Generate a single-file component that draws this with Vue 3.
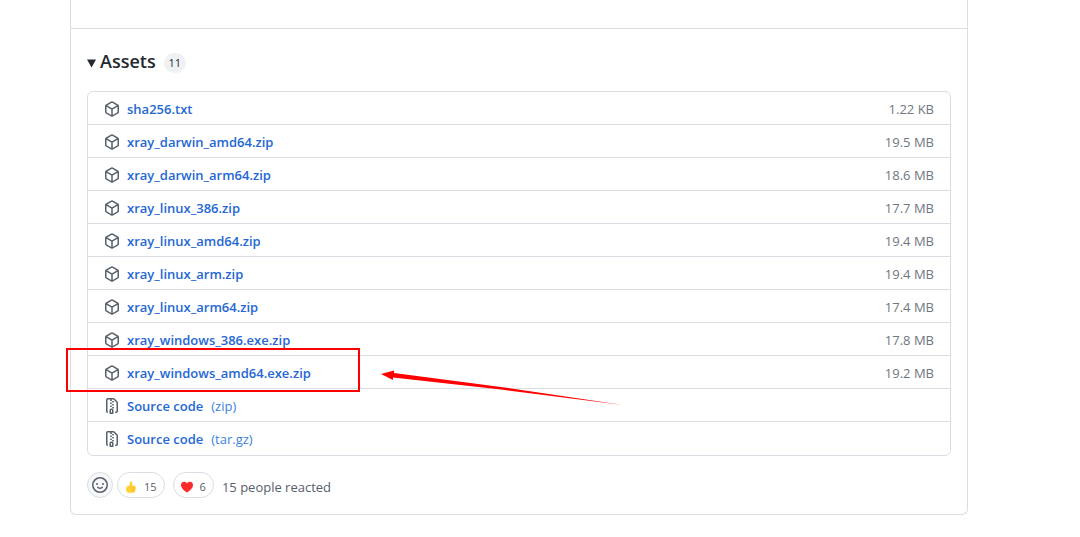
<script setup>
import { ref } from 'vue'

const assets = ref([
  { name: 'sha256.txt', size: '1.22 KB' },
  { name: 'xray_darwin_amd64.zip', size: '19.5 MB' },
  { name: 'xray_darwin_arm64.zip', size: '18.6 MB' },
  { name: 'xray_linux_386.zip', size: '17.7 MB' },
  { name: 'xray_linux_amd64.zip', size: '19.4 MB' },
  { name: 'xray_linux_arm.zip', size: '19.4 MB' },
  { name: 'xray_linux_arm64.zip', size: '17.4 MB' },
  { name: 'xray_windows_386.exe.zip', size: '17.8 MB' },
  { name: 'xray_windows_amd64.exe.zip', size: '19.2 MB', marked: true },
  { name: 'Source code', ext: '(zip)' },
  { name: 'Source code', ext: '(tar.gz)' }
])
</script>

<template>
  <main class="release-card">
    <div class="release-body"></div>

    <div class="release-footer">
      <details open>
        <summary class="assets-title">
          <svg class="caret" viewBox="0 0 9 9"><path d="M0 0.5h9L4.5 8.5z" /></svg>
          <span class="title-text">Assets</span>
          <span class="counter">{{ assets.length }}</span>
        </summary>

        <ul class="asset-list">
          <li v-for="(item, i) in assets" :key="i" class="asset-row">
            <svg v-if="item.ext" class="icon" viewBox="0 0 16 16">
              <path fill-rule="evenodd" d="M3.5 1.75a.25.25 0 01.25-.25h3a.75.75 0 000 1.5h.5a.75.75 0 000-1.5h2.086a.25.25 0 01.177.073l2.914 2.914a.25.25 0 01.073.177v8.586a.25.25 0 01-.25.25h-.5a.75.75 0 000 1.5h.5A1.75 1.75 0 0014 13.25V4.664c0-.464-.184-.909-.513-1.237L10.573.513A1.75 1.75 0 009.336 0H3.75A1.75 1.75 0 002 1.75v11.5c0 .649.353 1.214.874 1.515a.75.75 0 10.752-1.298.25.25 0 01-.126-.217V1.75zM8.75 3a.75.75 0 000 1.5h.5a.75.75 0 000-1.5h-.5zM6 5.25a.75.75 0 01.75-.75h.5a.75.75 0 010 1.5h-.5A.75.75 0 016 5.25zm2 1.5A.75.75 0 018.75 6h.5a.75.75 0 010 1.5h-.5A.75.75 0 018 6.75zm-1.25.75a.75.75 0 000 1.5h.5a.75.75 0 000-1.5h-.5zM8 9.75A.75.75 0 018.75 9h.5a.75.75 0 010 1.5h-.5A.75.75 0 018 9.75zm-.75.75a1.75 1.75 0 00-1.75 1.75v3c0 .414.336.75.75.75h2.5a.75.75 0 00.75-.75v-3a1.75 1.75 0 00-1.75-1.75h-.5zM7 12.25a.25.25 0 01.25-.25h.5a.25.25 0 01.25.25v2.25H7v-2.25z" />
            </svg>
            <svg v-else class="icon" viewBox="0 0 16 16">
              <path fill-rule="evenodd" d="M8.878.392a1.75 1.75 0 00-1.756 0l-5.25 3.045A1.75 1.75 0 001 4.951v6.098c0 .624.332 1.2.872 1.514l5.25 3.045a1.75 1.75 0 001.756 0l5.25-3.045c.54-.313.872-.89.872-1.514V4.951c0-.624-.332-1.2-.872-1.514L8.878.392zM7.875 1.69a.25.25 0 01.25 0l4.63 2.685L8 7.133 3.245 4.375l4.63-2.685zM2.5 5.677v5.372c0 .09.047.171.125.216l4.625 2.683V8.432L2.5 5.677zm6.25 8.271l4.625-2.683a.25.25 0 00.125-.216V5.677L8.75 8.432v5.516z" />
            </svg>
            <a href="#" class="asset-link">
              <span class="asset-name">{{ item.name }}</span>
              <span v-if="item.ext" class="asset-ext">{{ item.ext }}</span>
            </a>
            <span v-if="item.size" class="asset-size">{{ item.size }}</span>
            <template v-if="item.marked">
              <div class="mark-box"></div>
              <svg class="mark-arrow" viewBox="0 0 242 36">
                <path d="M0 4L13 0.5V3L120 17L242 35L120 19.5L12 7.5V10z" />
              </svg>
            </template>
          </li>
        </ul>
      </details>

      <div class="reactions">
        <button type="button" class="react-add" aria-label="Add reaction">
          <svg class="icon" viewBox="0 0 16 16">
            <path fill-rule="evenodd" d="M1.5 8a6.5 6.5 0 1113 0 6.5 6.5 0 01-13 0zM8 0a8 8 0 100 16A8 8 0 008 0zM5 8a1 1 0 100-2 1 1 0 000 2zm7-1a1 1 0 11-2 0 1 1 0 012 0zM5.32 9.636a.75.75 0 011.038.175l.007.009c.103.118.22.222.35.31.264.178.683.37 1.285.37.602 0 1.02-.192 1.285-.371.13-.088.247-.192.35-.31l.007-.008a.75.75 0 111.222.87c-.06.08-.13.16-.206.235-.16.166-.338.316-.53.445-.63.418-1.37.638-2.127.629-.946 0-1.652-.308-2.126-.63a3.32 3.32 0 01-.737-.686.75.75 0 01.182-1.041z" />
          </svg>
        </button>
        <button type="button" class="react-pill">
          <svg class="emoji" viewBox="0 0 12 12">
            <path fill="#ffcf33" d="M5.6 0.3C6.7 0.2 7.3 1 7.3 2V4.8H9.3C10.3 4.8 10.7 5.5 10.4 6.2C10.9 6.7 10.9 7.4 10.4 7.9C10.8 8.6 10.6 9.3 10 9.7C10.1 10.9 9.5 11.7 8.3 11.7H3.8C2.2 11.7 1.2 10.7 1.2 9V7C1.2 5.8 2 5.2 3.2 5.1C4.4 4.9 4.9 4 4.9 2.6V1.2C4.9 0.7 5.1 0.4 5.6 0.3z" />
            <path fill="none" stroke="#f5b82a" stroke-width="0.6" d="M7.3 4.8C6.3 5 6.1 5.7 6.7 6.2H10.2M6.8 7.9H10.2M6.8 9.7H9.8" />
          </svg>
          <span>15</span>
        </button>
        <button type="button" class="react-pill spaced">
          <svg class="emoji" viewBox="0 0 12 12">
            <path fill="#fb2b2b" d="M6 11.6C3.8 9.9 0 7.4 0 3.9C0 2 1.4 0.8 3.1 0.8C4.4 0.8 5.4 1.4 6 2.5C6.6 1.4 7.6 0.8 8.9 0.8C10.6 0.8 12 2 12 3.9C12 7.4 8.2 9.9 6 11.6z" />
          </svg>
          <span>6</span>
        </button>
        <span class="react-total">15 people reacted</span>
      </div>
    </div>
  </main>
</template>

<style>
body { background: #fff; }
</style>

<style scoped>
.release-card {
  margin: 0 112px 0 70px; border: 1px solid #d8dee4; border-top: none; border-radius: 0 0 6px 6px;
  color: #24292f; font-family: 'Open Sans', 'Noto Sans', sans-serif; font-size: 13px; line-height: 20px;
}
.release-body { height: 28px; border-bottom: 1px solid #d8dee4; }
.release-footer { padding: 16px; }

.assets-title { display: flex; align-items: center; height: 32px; list-style: none; cursor: pointer; }
.caret { width: 9px; height: 9px; fill: #24292f; margin-top: 4px; }
.title-text { font-size: 18px; line-height: 28px; font-weight: 600; margin-left: 4px; }
.counter {
  min-width: 22px; box-sizing: border-box; padding: 0 4px; margin: 4px 0 0 8px; text-align: center;
  border-radius: 10px; background: #eff1f3; font-size: 11px; line-height: 20px; font-weight: 500;
}

/* asset table */
.asset-list { list-style: none; margin: 14px 0 0; padding: 0; border: 1px solid #d8dee4; border-radius: 6px; }
.asset-row {
  position: relative; display: flex; align-items: center; height: 30px; padding: 2px 16px 0;
  border-bottom: 1px solid #d8dee4;
}
.asset-row:last-child { border-bottom: none; padding-bottom: 1px; }
.icon { width: 16px; height: 16px; fill: #57606a; flex: none; }
.asset-link { display: flex; gap: 8px; flex: 1; margin-left: 7px; color: #2468d4; text-decoration: none; }
.asset-link:hover { text-decoration: underline; }
.asset-name { font-weight: 600; }
.asset-ext { color: #3b82dc; }
.asset-size { color: #6e7781; }

/* red marker over the amd64 build */
.mark-box { position: absolute; left: -22px; top: -8px; width: 290px; height: 40px; border: 2px solid #f00; z-index: 1; }
.mark-arrow { position: absolute; left: 293px; top: 14px; width: 242px; height: 36px; fill: #f00; z-index: 1; }

/* reactions */
.reactions { display: flex; align-items: center; margin-top: 16px; }
.react-add, .react-pill {
  display: flex; align-items: center; justify-content: center; height: 26px; box-sizing: border-box;
  border: 1px solid #d8dee4; border-radius: 13px; font-family: inherit; font-size: 11px; color: #57606a; cursor: pointer;
}
.react-add { width: 26px; padding: 0; background: #f6f8fa; }
.react-pill { padding: 3px 7px 0; gap: 7px; margin-left: 4px; background: #fff; }
.react-pill.spaced { margin-left: 8px; }
.emoji { width: 12px; height: 12px; }
.react-total { margin-left: 8px; padding-top: 3px; color: #57606a; }
</style>
